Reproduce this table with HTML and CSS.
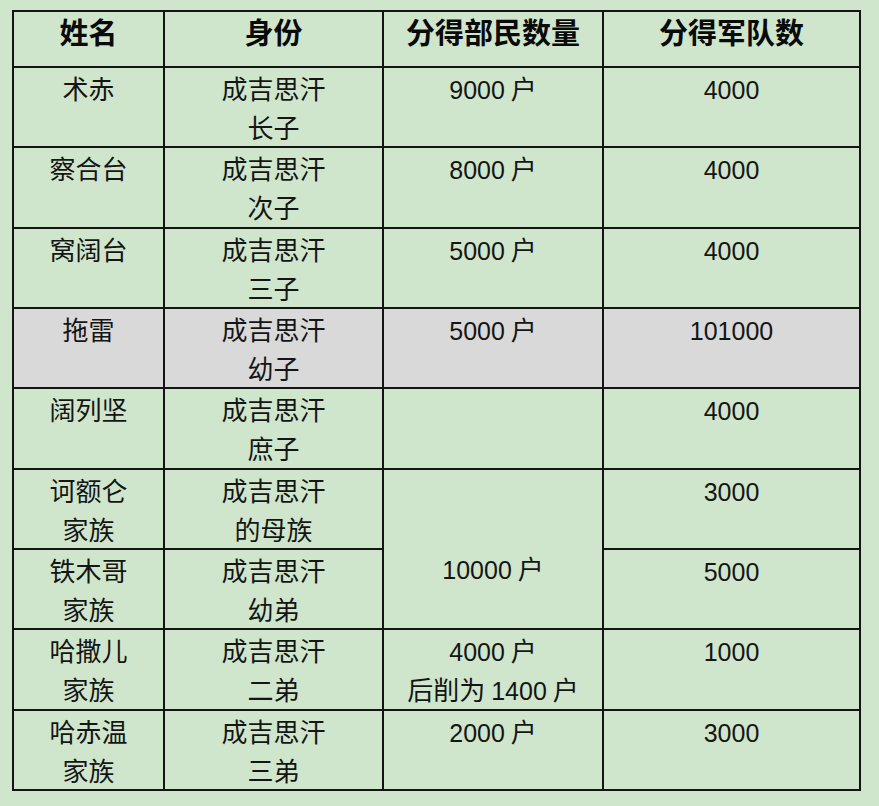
FILE: index.html
```html
<!DOCTYPE html>
<html lang="zh">
<head>
<meta charset="utf-8">
<link rel="stylesheet" href="styles.css">
</head>
<body>
<table class="grid">
  <colgroup>
    <col class="c1"><col class="c2"><col class="c3"><col class="c4">
  </colgroup>
  <thead>
    <tr class="head">
      <th>姓名</th><th>身份</th><th>分得部民数量</th><th>分得军队数</th>
    </tr>
  </thead>
  <tbody>
    <tr>
      <td>术赤</td><td>成吉思汗<br>长子</td><td><span class="num">9000</span> 户</td><td><span class="num">4000</span></td>
    </tr>
    <tr>
      <td>察合台</td><td>成吉思汗<br>次子</td><td><span class="num">8000</span> 户</td><td><span class="num">4000</span></td>
    </tr>
    <tr>
      <td>窝阔台</td><td>成吉思汗<br>三子</td><td><span class="num">5000</span> 户</td><td><span class="num">4000</span></td>
    </tr>
    <tr class="gray">
      <td>拖雷</td><td>成吉思汗<br>幼子</td><td><span class="num">5000</span> 户</td><td><span class="num">101000</span></td>
    </tr>
    <tr>
      <td>阔列坚</td><td>成吉思汗<br>庶子</td><td></td><td><span class="num">4000</span></td>
    </tr>
    <tr>
      <td>诃额仑<br>家族</td><td>成吉思汗<br>的母族</td><td rowspan="2" class="merged"><span class="num">10000</span> 户</td><td><span class="num">3000</span></td>
    </tr>
    <tr>
      <td>铁木哥<br>家族</td><td>成吉思汗<br>幼弟</td><td><span class="num">5000</span></td>
    </tr>
    <tr>
      <td>哈撒儿<br>家族</td><td>成吉思汗<br>二弟</td><td><span class="num">4000</span> 户<br>后削为 <span class="num">1400</span> 户</td><td><span class="num">1000</span></td>
    </tr>
    <tr>
      <td>哈赤温<br>家族</td><td>成吉思汗<br>三弟</td><td><span class="num">2000</span> 户</td><td><span class="num">3000</span></td>
    </tr>
  </tbody>
</table>
</body>
</html>
```

FILE: styles.css
```css
html, body {
  margin: 0;
  padding: 0;
  background: #cfe6cc;
}

body {
  padding: 10px 0 0 12px;
  font-family: "Noto Sans CJK SC", "Noto Sans", sans-serif;
  color: #151515;
}

.grid {
  border-collapse: collapse;
  table-layout: fixed;
  width: 849px;
}

.c1 { width: 151px; }
.c2 { width: 219px; }
.c3 { width: 220px; }
.c4 { width: 257px; }

.grid th,
.grid td {
  border: 2px solid #141414;
  text-align: center;
  vertical-align: top;
  padding: 0;
  line-height: 39px;
}

.grid th {
  font-size: 29px;
  font-weight: 700;
  color: #0a0a0a;
}

.grid td {
  font-size: 26px;
  font-weight: 400;
}

.head {
  height: 56px;
}

.grid tbody tr {
  height: 80.33px;
}

.gray td {
  background: #d9d9d9;
}

.num {
  font-family: "Liberation Sans", "Noto Sans", sans-serif;
  font-size: 25px;
  line-height: 20px;
}

.grid td.merged {
  padding-top: 78px;
}
```
